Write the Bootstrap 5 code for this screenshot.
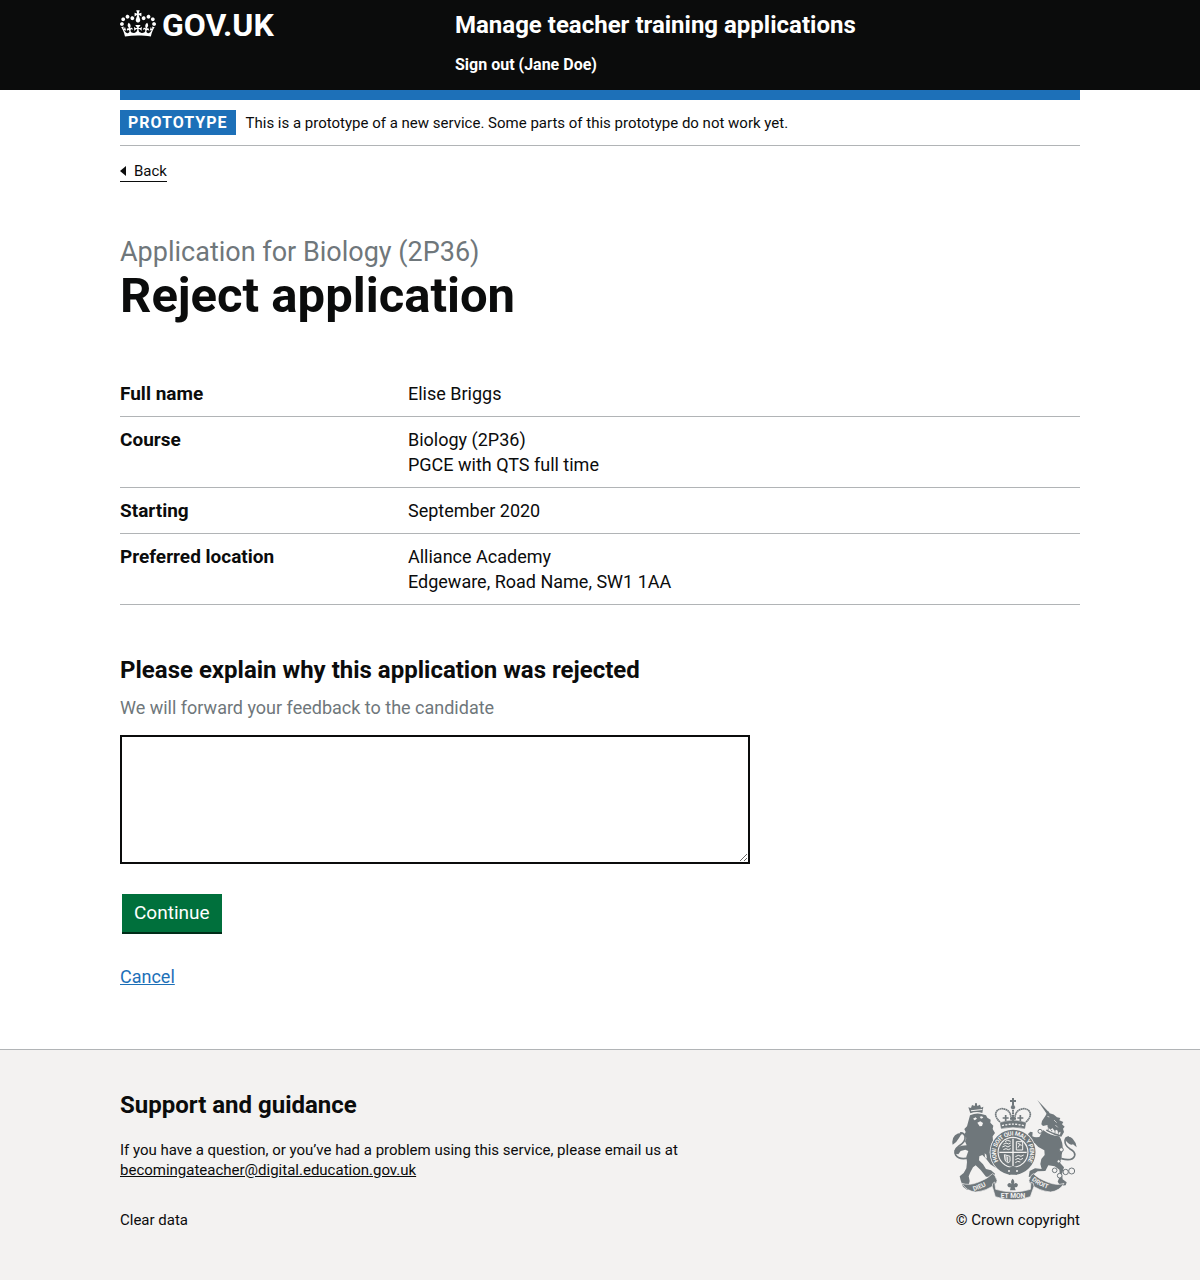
<!DOCTYPE html>
<html lang="en">
<head>
<meta charset="utf-8">
<meta name="viewport" content="width=device-width, initial-scale=1">
<title>Reject application - Manage teacher training applications</title>
<link href="https://cdn.jsdelivr.net/npm/bootstrap@5.3.0/dist/css/bootstrap.min.css" rel="stylesheet">
<style>
  body { font-family: Roboto, "Liberation Sans", sans-serif; font-size: 18px; line-height: 25px; color: #0b0c0c; background: #fff; }
  .page-width { width: 100%; max-width: 990px; margin: 0 auto; padding: 0 15px; }
  .site-header { background: #0b0c0c; color: #fff; padding: 10px 0; }
  .site-header a { color: #fff; text-decoration: none; font-weight: 700; }
  .logo-col { flex: 0 0 335px; }
  .logo-link { font-size: 32px; line-height: 30px; gap: 6px; }
  .service-name { font-size: 24px; line-height: 30px; }
  .sign-out { font-size: 16px; line-height: 20px; margin: 15px 0 5px; }
  .blue-bar { height: 10px; background: #1d70b8; }
  .phase { padding: 10px 0; gap: 10px; border-bottom: 1px solid #b1b4b6; }
  .phase-tag { background: #1d70b8; color: #fff; font-weight: 700; font-size: 16px; line-height: 25px; letter-spacing: 1px; padding: 0 8px; }
  .small-copy { font-size: 15px; line-height: 20px; }
  .back-link { color: #0b0c0c; text-decoration: none; border-bottom: 1px solid #0b0c0c; gap: 8px; margin-top: 15px; }
  .caption-text { color: #6f777b; font-size: 27px; line-height: 30px; margin-bottom: 4px; }
  .title-text { font-size: 49px; line-height: 50px; font-weight: 700; margin-bottom: 50px; }
  .page-main { padding: 55px 0 60px; }
  .summary-list { margin-bottom: 50px; }
  .summary-row { border-bottom: 1px solid #b1b4b6; padding: 10px 0; }
  .summary-row dt { flex: 0 0 30%; font-size: 19px; font-weight: 700; }
  .section-title { font-size: 24px; line-height: 30px; font-weight: 700; }
  .hint-text { color: #6f777b; margin: 10px 0 15px; }
  .reason-box { display: block; width: 630px; max-width: 100%; height: 129px; border: 2px solid #0b0c0c; border-radius: 0; padding: 5px; }
  .go-btn { --bs-btn-color: #fff; --bs-btn-bg: #00703c; --bs-btn-hover-color: #fff; --bs-btn-hover-bg: #005a30; --bs-btn-border-width: 0; --bs-btn-border-radius: 0;
    font-size: 19px; line-height: 22px; padding: 8px 12px; margin: 30px 2px 32px; box-shadow: 0 2px 0 #002d18; }
  .blue-link { color: #1d70b8; }
  .site-footer { background: #f3f2f1; border-top: 1px solid #b1b4b6; padding: 40px 0 50px; }
  .site-footer a { color: #0b0c0c; }
  .footer-meta { margin: 30px 0 0; }
  .crest { display: block; margin: 0 3px 10px auto; }
  .crest text { font-family: Roboto, sans-serif; font-weight: 700; fill: #f3f2f1; }
</style>
</head>
<body>
<header class="site-header">
  <div class="page-width d-flex flex-wrap">
    <div class="logo-col">
      <a href="#" class="logo-link d-inline-flex align-items-start">
        <svg width="36" height="27" viewBox="0 0 132 97" fill="#fff" aria-hidden="true"><path d="M25 30.2c3.5 1.5 7.7-.2 9.1-3.7 1.5-3.6-.2-7.8-3.9-9.2-3.6-1.4-7.6.3-9.1 3.9-1.4 3.5.3 7.5 3.9 9zM9 39.5c3.6 1.5 7.8-.2 9.2-3.7 1.5-3.6-.2-7.8-3.9-9.1-3.6-1.5-7.6.2-9.1 3.8-1.4 3.5.3 7.5 3.8 9zM4.4 57.2c3.5 1.5 7.7-.2 9.1-3.8 1.5-3.6-.2-7.7-3.9-9.1-3.5-1.5-7.6.3-9.1 3.8-1.4 3.5.3 7.6 3.9 9.1zm38.3-21.4c3.5 1.5 7.7-.2 9.1-3.8 1.5-3.6-.2-7.7-3.9-9.1-3.6-1.5-7.6.3-9.1 3.8-1.3 3.6.4 7.7 3.9 9.1zm64.4-5.6c-3.6 1.5-7.8-.2-9.1-3.7-1.5-3.6.2-7.8 3.8-9.2 3.6-1.4 7.7.3 9.2 3.9 1.3 3.5-.4 7.5-3.9 9zm15.9 9.3c-3.6 1.5-7.7-.2-9.1-3.7-1.5-3.6.2-7.8 3.7-9.1 3.6-1.5 7.7.2 9.2 3.8 1.5 3.5-.3 7.5-3.8 9zm4.7 17.7c-3.6 1.5-7.8-.2-9.2-3.8-1.5-3.6.2-7.7 3.9-9.1 3.6-1.5 7.7.3 9.2 3.8 1.3 3.5-.4 7.6-3.9 9.1zM89.3 35.8c-3.6 1.5-7.8-.2-9.2-3.8-1.4-3.6.2-7.7 3.9-9.1 3.6-1.5 7.7.3 9.2 3.8 1.4 3.6-.3 7.7-3.9 9.1zM69.7 17.7l8.9 4.7V9.3l-8.9 2.8c-.2-.3-.5-.6-.9-.9L72.4 0H59.6l3.5 11.2c-.3.3-.6.5-.9.9l-8.8-2.8v13.1l8.8-4.7c.3.3.6.7.9.9l-5 15.4v.1c-.2.8-.4 1.6-.4 2.4 0 4.1 3.1 7.5 7 8.1h.2c.3 0 .7.1 1 .1.4 0 .7 0 1-.1h.2c4-.6 7.1-4.1 7.1-8.1 0-.8-.1-1.7-.4-2.4V34l-5.1-15.4c.4-.2.7-.6 1-.9zM66 92.8c16.9 0 32.8 1.1 47.1 3.2 4-16.9 8.9-26.7 14-33.5l-9.6-3.4c1 4.9 1.1 7.2 0 10.2-1.5-1.4-3-4.3-4.2-8.7L108.6 76c2.8-2 5-3.2 7.5-3.3-4.4 9.4-10 11.9-13.6 11.2-4.3-.8-6.3-4.6-5.6-7.9 1-4.7 5.7-5.9 8-.5 4.3-8.7-3-11.4-7.6-8.8 7.1-7.2 7.9-13.5 2.1-21.1-8 6.1-8.1 12.3-4.5 20.8-4.7-5.4-12.1-2.5-9.5 6.2 3.4-5.2 7.9-2 7.2 3.1-.6 4.3-6.4 7.8-13.5 7.2-10.3-.9-10.9-8-11.2-13.8 2.5-.5 7.1 1.8 11 7.3L80.2 60c-4.1 4.4-8 5.3-12.3 5.4 1.4-4.4 8-11.6 8-11.6H55.5s6.4 7.2 7.9 11.6c-4.2-.1-8-1-12.3-5.4l1.4 16.4c3.9-5.5 8.5-7.7 10.9-7.3-.3 5.8-.9 12.8-11.1 13.8-7.2.6-12.9-2.9-13.5-7.2-.7-5 3.8-8.3 7.1-3.1 2.7-8.7-4.6-11.6-9.4-6.2 3.7-8.5 3.6-14.7-4.6-20.8-5.8 7.6-5 13.9 2.2 21.1-4.7-2.6-11.9.1-7.7 8.8 2.3-5.5 7.1-4.2 8.1.5.7 3.3-1.3 7.1-5.7 7.9-3.5.7-9-1.8-13.5-11.2 2.5.1 4.7 1.3 7.5 3.3l-4.7-15.4c-1.2 4.4-2.7 7.2-4.3 8.7-1.1-3-.9-5.3 0-10.2l-9.5 3.4c5 6.9 9.9 16.7 14 33.5 14.8-2.1 30.8-3.2 47.7-3.2z"/></svg>
        <span>GOV.UK</span>
      </a>
    </div>
    <div>
      <a href="#" class="service-name d-block">Manage teacher training applications</a>
      <nav class="sign-out"><a href="#">Sign out (Jane Doe)</a></nav>
    </div>
  </div>
</header>

<div class="page-width">
  <div class="blue-bar"></div>
  <div class="phase d-flex align-items-center">
    <strong class="phase-tag">PROTOTYPE</strong>
    <span class="small-copy">This is a prototype of a new service. Some parts of this prototype do not work yet.</span>
  </div>
  <a href="#" class="back-link small-copy d-inline-flex align-items-center"><svg width="6" height="10" viewBox="0 0 6 10" aria-hidden="true"><path d="M0 5l6-5v10z" fill="#0b0c0c"/></svg>Back</a>

  <main class="page-main">
    <h1 class="title-text"><span class="caption-text d-block fw-normal">Application for Biology (2P36)</span>Reject application</h1>
    <dl class="summary-list">
      <div class="summary-row d-flex"><dt>Full name</dt><dd class="mb-0">Elise Briggs</dd></div>
      <div class="summary-row d-flex"><dt>Course</dt><dd class="mb-0">Biology (2P36)<br>PGCE with QTS full time</dd></div>
      <div class="summary-row d-flex"><dt>Starting</dt><dd class="mb-0">September 2020</dd></div>
      <div class="summary-row d-flex"><dt>Preferred location</dt><dd class="mb-0">Alliance Academy<br>Edgeware, Road Name, SW1 1AA</dd></div>
    </dl>
    <form>
      <label for="reason" class="section-title d-block">Please explain why this application was rejected</label>
      <p id="reason-hint" class="hint-text">We will forward your feedback to the candidate</p>
      <textarea id="reason" class="reason-box" aria-describedby="reason-hint"></textarea>
      <button type="submit" class="btn go-btn">Continue</button>
    </form>
    <a href="#" class="blue-link">Cancel</a>
  </main>
</div>

<footer class="site-footer">
  <div class="page-width d-flex flex-wrap justify-content-between align-items-end small-copy">
    <div>
      <h2 class="section-title mb-3">Support and guidance</h2>
      <p class="mb-0 pt-1">If you have a question, or you’ve had a problem using this service, please email us at<br><a href="#">becomingateacher@digital.education.gov.uk</a></p>
      <p class="footer-meta"><a href="#" class="text-decoration-none">Clear data</a></p>
    </div>
    <div class="text-end">
      <svg class="crest" width="125" height="102" viewBox="36 24 375 306" role="img" aria-label="Royal coat of arms">
        <defs>
          <path id="garter" d="M179 228A57 57 0 1 1 259 228"/>
          <path id="dieu" d="M101 303Q135 293 162 273"/>
          <path id="droit" d="M275 270Q300 293 344 303"/>
        </defs>
        <g fill="#6f777b" stroke="none">
          <!-- lion: crown, mane, body, limbs and tail -->
          <path d="M91 70l-6-18 8 2 3-9 8 3 2-9h4l2 9 8-4 3 9 7-3-3 19q-17-6-36 1z"/>
          <path d="M90 76q18-8 34-4l14 4 4 7 10 6-1 9 9 9-2 10 7 12-7 10 1 14-7 14 6 17 9 17 5 22-5 10-16-10-14-18-10-10-9 4-1 12 12 12 9 14 15 4 12 10-4 10-23-1-16-20-15-14-8 6-8 15-5 12 3 14-3 12 14 6v8l-18 1-13-10-7-19-3-12 12-10 8-14 2-19-2-16 6-17-9-4-14 4-7 10-9-2-3-9 8-10 14-5 15-1-5-12 4-10-7-8 5-10-4-9 8-8z"/>
          <path d="M88 203q-30 8-41-8-7-14 10-27 21-13 18-30-4-11-15-9" fill="none" stroke="#6f777b" stroke-width="5"/>
          <path d="M38 164q-4-17 7-28 9-9 25-7-9 5-13 15-6 12-19 20z"/>
        </g>
        <g fill="#f3f2f1"><path d="M99 86l8-4 4 4-7 5zM119 80l7-1 4 4-7 3zM112 98l9-4 8 5-3 9-7 1zM93 61l34-4v3l-34 4zM134 190l5 4 2 12-6-4z"/></g>
        <!-- unicorn: horn, head, body, limbs and tail -->
        <g fill="#6f777b">
          <path d="M292 30l36 38-7 5z"/>
          <path d="M324 63l5 7q13 2 22 12l10 2-3 7 12 5-4 7 8 7-5 6 3 10-8 14-18-4-28-14q7-11 4-17l-13 3-5-5 2-10 10-15z"/>
          <path d="M309 120q22 17 49 19 12 19 10 42-4 14-3 25l-8 9 15 17-6 20 2 16 12 9-3 9-16 1-8-12 7-17-2-19-14-10-19-3-9 17-23 1-15 10-2 8-10-2 3-17 16-8 20 2-4-15 3-15 10-12-1-14-18-10-11-12q-13 0-8 10l11 12-1 11-10-2-3-13-13-12-2-13 15-9 25-2z"/>
          <path d="M282 152l-14-5-4-15 7-7 7 2-1 12 13 5z"/>
          <path d="M410 172l-11-9q-7 3-15-4-8-7-9-15 13-8 23 2 10 10 12 26z"/>
        </g>
        <g fill="none" stroke="#6f777b">
          <path d="M364 206q34 9 40-9 3-12-15-21-15-10-14-25 2-10 12-10" stroke-width="5"/>
          <g stroke-width="3" fill="#f3f2f1"><circle cx="300" cy="124" r="6"/><circle cx="356" cy="214" r="5"/><circle cx="364" cy="179" r="6"/><circle cx="344" cy="241" r="7"/><circle cx="359" cy="257" r="7"/><circle cx="377" cy="246" r="8"/><circle cx="395" cy="243" r="9"/></g>
          <path d="M313 112q20 18 47 22l2-9-7 3-4-9-7 4-7-9-5 5-10-8-3 5z" stroke="none" fill="#f3f2f1"/>
          <g stroke="none" fill="#6f777b"><circle cx="325" cy="117" r="2"/><circle cx="335" cy="122" r="2"/><circle cx="345" cy="126" r="2"/><circle cx="355" cy="129" r="2"/></g>
          <path d="M322 79l6 2M342 90l8 8M346 105l7 7" stroke="#f3f2f1" stroke-width="2"/>
        </g>
        <!-- royal crown -->
        <g fill="none" stroke="#6f777b">
          <path d="M180 96q-18-17-11-31 10-14 30-6 15 8 15 31M258 96q18-17 11-31-10-14-30-6-15 8-15 31" stroke-width="5" stroke-dasharray="5 1"/>
          <path d="M219 24v23M210 33h18" stroke-width="6"/><circle cx="219" cy="52" r="6" fill="#6f777b"/>
          <path d="M219 60v28" stroke-width="6" stroke-dasharray="5 2"/>
          <path d="M181 98q38-12 76 0l-3 17q-35-8-70 0z" fill="#6f777b" stroke-width="2"/>
          <path d="M186 107q33-9 66 0" stroke="#f3f2f1" stroke-width="4" stroke-dasharray="6 4"/>
          <path d="M197 75v18M188 84h18M241 75v18M232 84h18M219 78v16M210 86h18" stroke-width="5"/>
        </g>
        <!-- garter and quartered shield -->
        <circle cx="219" cy="187" r="70" fill="#f3f2f1"/><circle cx="219" cy="187" r="57" fill="none" stroke="#6f777b" stroke-width="21"/>
        <circle cx="219" cy="187" r="43" fill="#6f777b"/>
        <g fill="none" stroke="#f3f2f1" stroke-width="3">
          <path d="M219 146v82M178 187h82" stroke-width="4"/>
          <path d="M190 163l8-4 8 3 6-3M187 171l9-4 8 4 8-5M195 155l7-4 10 3M190 179l8-3 7 3 7-3M226 200l9-4 8 3 8-4M226 209l8-4 8 4 7-4M226 218l7-4 8 2"/>
          <path d="M229 155h19v25h-19zM234 173l5-9 6 2M233 160l8 3M193 194l17 5v15q-7 10-15-4zM198 197v15M203 200v16"/>
        </g>
        <path d="M200 237l19-9 19 9-8 18-11-6-11 6z" fill="#6f777b"/><circle cx="207" cy="243" r="3" fill="#f3f2f1"/><circle cx="231" cy="243" r="3" fill="#f3f2f1"/>
        <text font-size="18" dy="6"><textPath href="#garter" startOffset="50%" text-anchor="middle">HONI SOIT QUI MAL Y PENSE</textPath></text>
        <!-- motto ribbon -->
        <g fill="#6f777b" stroke="#f3f2f1" stroke-width="2">
          <path d="M66 280q22 8 50-4 27-10 42-25 9 5 10 13 7 8-1 17-25 22-61 25-27-3-40-26z"/>
          <path d="M372 280q-22 8-50-4-27-10-42-25-9 5-10 13-7 8 1 17 25 22 61 25 27-3 40-26z"/>
          <path d="M164 276q-9 3-7 14l9 30q53 19 105 0l11-31q0-12-9-13l-2 22q-51 16-104 0z"/>
          <path d="M218 266q8 8 3 17 8-8 13 1-1 9-10 8l3 9h-17l2-9q-9 1-10-8 5-9 13-1-5-9 3-17z" stroke="none"/>
        </g>
        <text font-size="19"><textPath href="#dieu">DIEU</textPath></text>
        <text font-size="19"><textPath href="#droit">DROIT</textPath></text>
        <text x="219" y="324" font-size="20" text-anchor="middle">ET MON</text>
      </svg>
      <a href="#" class="text-decoration-none">© Crown copyright</a>
    </div>
  </div>
</footer>
<script src="https://cdn.jsdelivr.net/npm/bootstrap@5.3.0/dist/js/bootstrap.bundle.min.js"></script>
</body>
</html>
